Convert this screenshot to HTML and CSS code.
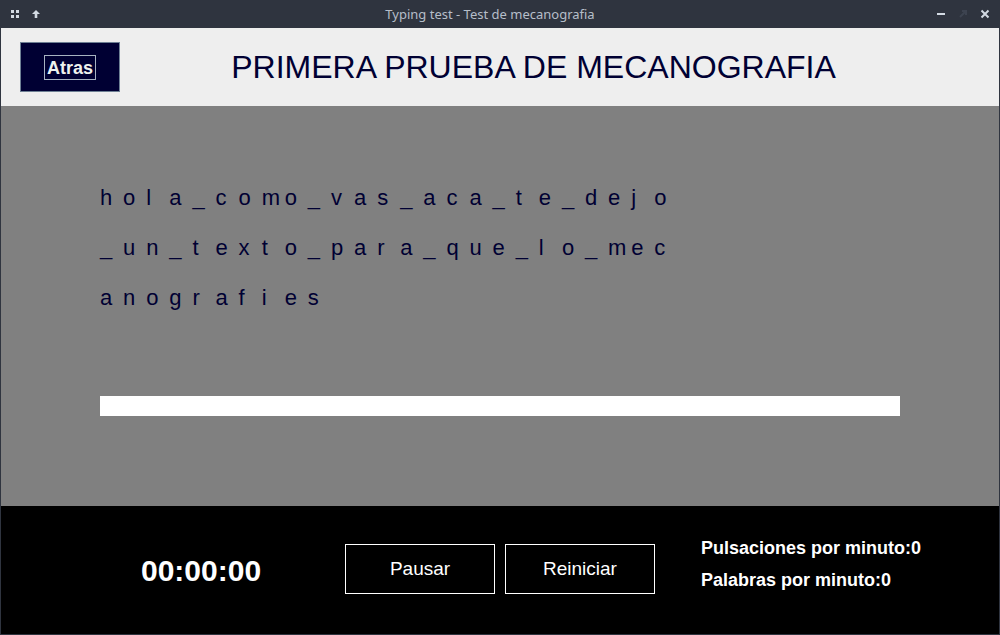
FILE: index.html
```html
<!DOCTYPE html>
<html>
<head>
<meta charset="utf-8">
<link rel="stylesheet" href="styles.css">
</head>
<body>
<div class="titlebar">
  <div class="tb-left">
    <svg class="tb-icon" width="10" height="10" viewBox="0 0 10 10"><rect x="1" y="1" width="3" height="3" fill="#d3dae3"/><rect x="6" y="1" width="3" height="3" fill="#d3dae3"/><rect x="1" y="6" width="3" height="3" fill="#d3dae3"/><rect x="6" y="6" width="3" height="3" fill="#d3dae3"/></svg>
    <svg class="tb-icon" width="10" height="10" viewBox="0 0 10 10"><path d="M5 1 L9 5 H6.3 V9 H3.7 V5 H1 Z" fill="#d3dae3"/></svg>
  </div>
  <div class="tb-title">Typing test - Test de mecanografia</div>
  <div class="tb-right">
    <svg width="10" height="10" viewBox="0 0 10 10"><rect x="1" y="4" width="8" height="2" fill="#d3dae3"/></svg>
    <svg width="10" height="10" viewBox="0 0 10 10"><path d="M2 8 L8 2 M4 2 H8 V6" stroke="#3d4350" stroke-width="2" fill="none"/></svg>
    <svg width="10" height="10" viewBox="0 0 10 10"><path d="M1.5 1.5 L8.5 8.5 M8.5 1.5 L1.5 8.5" stroke="#d3dae3" stroke-width="2"/></svg>
  </div>
</div>
<div class="window">
  <header class="header">
    <button class="back"><span class="focus">Atras</span></button>
    <h1 class="title">PRIMERA PRUEBA DE MECANOGRAFIA</h1>
  </header>
  <main class="main">
    <div class="text">
      <div class="line"><span>h</span><span>o</span><span>l</span><span>a</span><span>_</span><span>c</span><span>o</span><span>m</span><span>o</span><span>_</span><span>v</span><span>a</span><span>s</span><span>_</span><span>a</span><span>c</span><span>a</span><span>_</span><span>t</span><span>e</span><span>_</span><span>d</span><span>e</span><span>j</span><span>o</span></div>
      <div class="line"><span>_</span><span>u</span><span>n</span><span>_</span><span>t</span><span>e</span><span>x</span><span>t</span><span>o</span><span>_</span><span>p</span><span>a</span><span>r</span><span>a</span><span>_</span><span>q</span><span>u</span><span>e</span><span>_</span><span>l</span><span>o</span><span>_</span><span>m</span><span>e</span><span>c</span></div>
      <div class="line"><span>a</span><span>n</span><span>o</span><span>g</span><span>r</span><span>a</span><span>f</span><span>i</span><span>e</span><span>s</span></div>
    </div>
    <div class="input"></div>
  </main>
  <footer class="footer">
    <div class="timer">00:00:00</div>
    <div class="buttons">
      <button class="ctrl">Pausar</button>
      <button class="ctrl">Reiniciar</button>
    </div>
    <div class="stats">
      <div class="stat">Pulsaciones por minuto:0</div>
      <div class="stat">Palabras por minuto:0</div>
    </div>
  </footer>
</div>
</body>
</html>
```

FILE: styles.css
```css
* { box-sizing: border-box; }
html, body { margin: 0; padding: 0; }
body {
  width: 1000px;
  height: 635px;
  background: #2f343f;
  overflow: hidden;
  font-family: "Liberation Sans", Arial, sans-serif;
}

.titlebar {
  height: 28px;
  display: flex;
  align-items: center;
  color: #aeb6c2;
}
.tb-left {
  display: flex;
  gap: 11px;
  padding-left: 10px;
  width: 200px;
}
.tb-title {
  flex: 1;
  text-align: center;
  font-family: "Noto Sans", "DejaVu Sans", sans-serif;
  font-size: 13px;
  color: #b6bec9;
  margin-right: 40px;
}
.tb-right {
  display: flex;
  gap: 12px;
  width: 180px;
  justify-content: flex-end;
  padding-right: 10px;
}

.window {
  margin: 0 1px 1px 1px;
  height: 606px;
  display: flex;
  flex-direction: column;
}

.header {
  height: 78px;
  background: #eeeeee;
  display: flex;
  align-items: center;
  padding-left: 19px;
}
.back {
  width: 100px;
  height: 50px;
  background: #000033;
  border: 1px solid #6e8094;
  margin: 0;
  padding: 0;
  display: flex;
  align-items: center;
  justify-content: center;
  font-family: "Liberation Sans", Arial, sans-serif;
  font-weight: bold;
  font-size: 18px;
  color: #eef2ee;
}
.focus {
  border: 1px solid #a7b3c2;
  padding: 2px 2px 1px 2px;
  line-height: 20px;
}
.title {
  flex: 1;
  margin: 0;
  padding-right: 52px;
  text-align: center;
  font-weight: normal;
  font-size: 32px;
  color: #000033;
}

.main {
  height: 400px;
  background: #808080;
  padding: 67px 0 0 99px;
}
.text { color: #000033; font-size: 22px; }
.line {
  display: flex;
  height: 50px;
  align-items: center;
}
.line span {
  display: block;
  width: 23.1px;
  flex: none;
}
.input {
  margin-top: 73px;
  width: 800px;
  height: 20px;
  background: #ffffff;
}

.footer {
  height: 128px;
  background: #000000;
  display: flex;
  align-items: center;
  padding-left: 140px;
  color: #ffffff;
}
.timer {
  font-weight: bold;
  font-size: 30px;
  margin-top: 1px;
  width: 204px;
}
.buttons {
  display: flex;
  gap: 10px;
  margin-top: -2px;
}
.ctrl {
  width: 150px;
  height: 50px;
  margin: 0;
  background: #000000;
  border: 1px solid #ffffff;
  color: #ffffff;
  font-family: "Liberation Sans", Arial, sans-serif;
  font-size: 19px;
  padding: 0;
}
.stats {
  margin-left: 46px;
  margin-top: -13px;
  display: flex;
  flex-direction: column;
  gap: 12px;
}
.stat {
  font-weight: bold;
  font-size: 18px;
  line-height: 20px;
}
```
